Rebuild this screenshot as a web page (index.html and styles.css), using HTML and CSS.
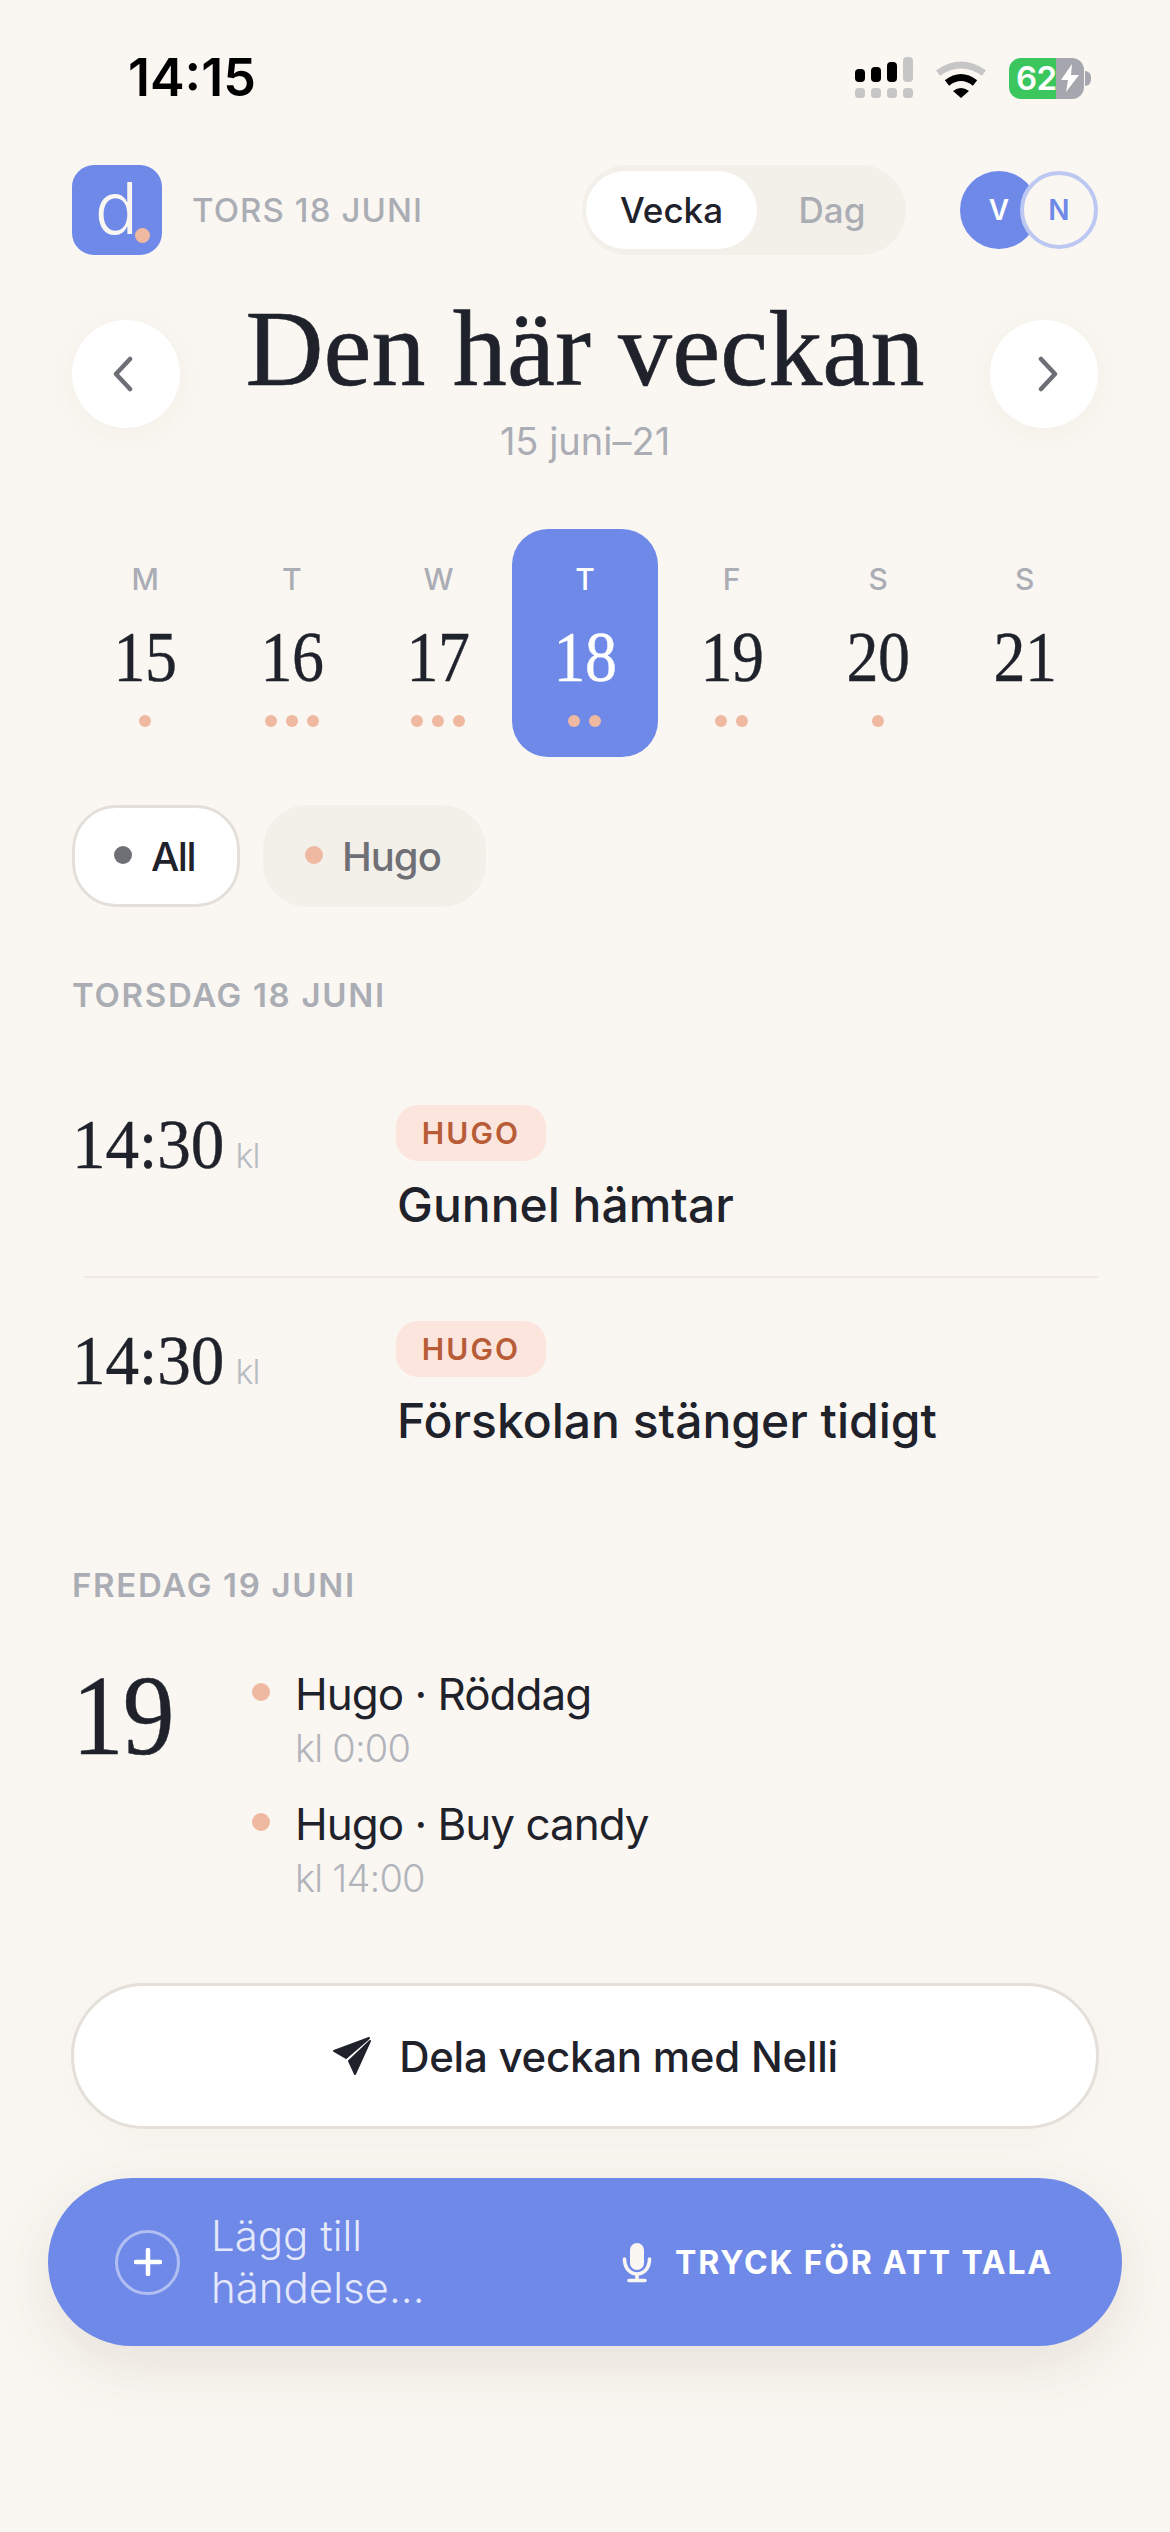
FILE: index.html
```html
<!DOCTYPE html>
<html lang="sv">
<head>
<meta charset="utf-8">
<title>Den här veckan</title>
<link rel="stylesheet" href="styles.css">
</head>
<body>
<main class="page">
  <header class="status">
    <span class="clock">14:15</span>
    <div class="status-icons">
      <svg class="signal" width="58" height="42" viewBox="0 0 58 42">
        <rect x="0" y="12" width="10" height="13" rx="4" fill="#000"/>
        <rect x="16" y="10" width="10" height="15" rx="4" fill="#000"/>
        <rect x="32" y="5" width="10" height="20" rx="4" fill="#000"/>
        <rect x="48" y="0" width="10" height="25" rx="4" fill="#c6c6c6"/>
        <rect x="0" y="31" width="10" height="10" rx="3.5" fill="#c6c6c6"/>
        <rect x="16" y="31" width="10" height="10" rx="3.5" fill="#c6c6c6"/>
        <rect x="32" y="31" width="10" height="10" rx="3.5" fill="#c6c6c6"/>
        <rect x="48" y="31" width="10" height="10" rx="3.5" fill="#c6c6c6"/>
      </svg>
      <svg class="wifi" width="52" height="38" viewBox="0 0 52 38">
        <path d="M3 13Q26 -3 49 13" fill="none" stroke="#c6c6c6" stroke-width="7"/>
        <path d="M12 23Q26 12 40 23" fill="none" stroke="#000" stroke-width="7"/>
        <path d="M18 31Q26 25 34 31L26 38Z" fill="#000"/>
      </svg>
      <div class="battery">
        <span class="battery-level">62</span>
        <svg class="bolt" width="20" height="28" viewBox="0 0 20 28"><path d="M12 0L1 16H8L6 28L19 11H11Z" fill="#fff"/></svg>
      </div>
      <span class="battery-nub"></span>
    </div>
  </header>

  <section class="topbar">
    <div class="brand">
      <div class="logo">d<span class="logo-dot"></span></div>
      <span class="today">TORS 18 JUNI</span>
    </div>
    <div class="segment">
      <span class="segment-item segment-active">Vecka</span>
      <span class="segment-item">Dag</span>
    </div>
    <div class="avatars">
      <span class="avatar avatar-v">V</span>
      <span class="avatar avatar-n">N</span>
    </div>
  </section>

  <section class="hero">
    <button class="nav-btn nav-prev" aria-label="Föregående">
      <svg width="22" height="36" viewBox="0 0 22 36"><path d="M18 3L4 18L18 33" fill="none" stroke="#6d6f76" stroke-width="4.5" stroke-linecap="round" stroke-linejoin="round"/></svg>
    </button>
    <div class="hero-title">
      <h1>Den här veckan</h1>
      <p class="range">15 juni–21</p>
    </div>
    <button class="nav-btn nav-next" aria-label="Nästa">
      <svg width="22" height="36" viewBox="0 0 22 36"><path d="M4 3L18 18L4 33" fill="none" stroke="#6d6f76" stroke-width="4.5" stroke-linecap="round" stroke-linejoin="round"/></svg>
    </button>
  </section>

  <section class="week">
    <div class="day"><span class="day-letter">M</span><span class="day-num">15</span><span class="dots"><i></i></span></div>
    <div class="day"><span class="day-letter">T</span><span class="day-num">16</span><span class="dots"><i></i><i></i><i></i></span></div>
    <div class="day"><span class="day-letter">W</span><span class="day-num">17</span><span class="dots"><i></i><i></i><i></i></span></div>
    <div class="day day-active"><span class="day-letter">T</span><span class="day-num">18</span><span class="dots"><i></i><i></i></span></div>
    <div class="day"><span class="day-letter">F</span><span class="day-num">19</span><span class="dots"><i></i><i></i></span></div>
    <div class="day"><span class="day-letter">S</span><span class="day-num">20</span><span class="dots"><i></i></span></div>
    <div class="day"><span class="day-letter">S</span><span class="day-num">21</span><span class="dots"></span></div>
  </section>

  <section class="chips">
    <span class="chip chip-on"><i class="chip-dot chip-dot-all"></i>All</span>
    <span class="chip chip-off"><i class="chip-dot"></i>Hugo</span>
  </section>

  <h2 class="section-label label-thu">TORSDAG 18 JUNI</h2>

  <article class="event">
    <div class="event-time"><span class="time-num">14:30</span><span class="time-kl">kl</span></div>
    <div class="event-body">
      <span class="badge">HUGO</span>
      <h3 class="event-title">Gunnel hämtar</h3>
    </div>
  </article>
  <hr class="divider">
  <article class="event">
    <div class="event-time"><span class="time-num">14:30</span><span class="time-kl">kl</span></div>
    <div class="event-body">
      <span class="badge">HUGO</span>
      <h3 class="event-title">Förskolan stänger tidigt</h3>
    </div>
  </article>

  <h2 class="section-label label-fri">FREDAG 19 JUNI</h2>

  <section class="friday">
    <div class="friday-col"><span class="friday-num">19</span></div>
    <div class="friday-items">
      <div class="item"><i class="item-dot"></i><div><p class="item-title">Hugo · Röddag</p><p class="item-time">kl 0:00</p></div></div>
      <div class="item"><i class="item-dot"></i><div><p class="item-title">Hugo · Buy candy</p><p class="item-time">kl 14:00</p></div></div>
    </div>
  </section>

  <button class="share">
    <svg width="40" height="40" viewBox="12 16 40 40"><path d="M49 18L14 31L26 38L47 20ZM50 21L29 41L35 54Z" fill="#1f222b" stroke="#1f222b" stroke-width="2" stroke-linejoin="round"/></svg>
    <span>Dela veckan med Nelli</span>
  </button>

  <section class="composer">
    <span class="plus">
      <svg width="28" height="28" viewBox="0 0 28 28"><path d="M14 2V26M2 14H26" stroke="#fff" stroke-width="4.5" stroke-linecap="round"/></svg>
    </span>
    <span class="composer-text">Lägg till händelse...</span>
    <span class="talk">
      <svg width="30" height="42" viewBox="16 11 30 42"><rect x="24" y="13" width="14" height="27" rx="7" fill="#faf7f2"/><path d="M18.5 29C18.5 38 24 44 31 44C38 44 43.500 38 43.500 29M31 44V50M23 50.500H39" fill="none" stroke="#faf7f2" stroke-width="3.600" stroke-linecap="round"/></svg>
      <span>TRYCK FÖR ATT TALA</span>
    </span>
  </section>
</main>
</body>
</html>
```
FILE: styles.css
```css
* { box-sizing: border-box; }
html, body { margin: 0; padding: 0; }
body {
  background: #faf7f2;
  font-family: Inter, "Noto Sans", "Liberation Sans", sans-serif;
  color: #1f222b;
  width: 1170px;
  height: 2532px;
  overflow: hidden;
}
h1, h2, h3, p { margin: 0; font-weight: inherit; }
i { display: block; font-style: normal; }
button { font-family: inherit; padding: 0; margin: 0; }

.page { width: 1170px; padding: 48px 72px 0; }

/* status bar */
.status {
  height: 60px;
  padding: 0 7px 0 56px;
  margin-bottom: 57px;
  display: flex;
  align-items: center;
  justify-content: space-between;
}
.clock { font-size: 52px; font-weight: 600; line-height: 60px; color: #000; }
.status-icons { display: flex; align-items: center; }
.wifi { margin-left: 22px; margin-top: 1px; }
.battery {
  width: 75px;
  height: 41px;
  margin-left: 22px;
  border-radius: 12px;
  background: linear-gradient(90deg, #3bc75e 0 63%, #a6a7ae 63% 100%);
  display: flex;
  align-items: center;
  padding-left: 7px;
  color: #fff;
}
.battery-level { font-size: 33px; font-weight: 600; letter-spacing: -.5px; line-height: 41px; }
.bolt { margin-left: 3px; flex: none; }
.battery-nub { width: 6px; height: 15px; margin-left: 1px; background: #a6a7ae; border-radius: 0 8px 8px 0; }

/* top bar */
.topbar { height: 90px; display: flex; align-items: center; }
.brand { display: flex; align-items: center; gap: 30px; margin-right: auto; }
.logo {
  width: 90px;
  height: 90px;
  border-radius: 22px;
  background: #6f89e8;
  color: #faf7f2;
  font-size: 72px;
  font-weight: 300;
  line-height: 86px;
  text-align: center;
  position: relative;
  padding-right: 1px;
}
.logo-dot { position: absolute; left: 63px; top: 63px; width: 15px; height: 15px; border-radius: 50%; background: #efb8a0; }
.today { font-size: 33px; font-weight: 500; color: #abadb5; letter-spacing: 1.1px; }
.segment {
  width: 324px;
  height: 90px;
  padding: 6px 4px;
  border-radius: 45px;
  background: #f3efe9;
  display: flex;
  align-items: center;
}
.segment-item { width: 145px; text-align: center; font-size: 35px; font-weight: 500; color: #abadb5; line-height: 78px; }
.segment-item + .segment-item { padding-left: 5px; }
.segment-active { width: 171px; background: #fff; color: #1f222b; border-radius: 39px; }
.avatars { display: flex; margin-left: 54px; }
.avatar { width: 78px; height: 78px; border-radius: 50%; display: flex; align-items: center; justify-content: center; font-size: 28px; font-weight: 600; }
.avatar-v { background: #6f89e8; color: #fff; }
.avatar-n { background: #faf7f2; color: #6f89e8; border: 4px solid #bcc8f2; margin-left: -18px; }

/* hero */
.hero { display: grid; grid-template-columns: 108px 1fr 108px; margin-top: 39px; }
.nav-btn {
  width: 108px;
  height: 108px;
  margin-top: 26px;
  border: 0;
  border-radius: 50%;
  background: #fff;
  box-shadow: 0 6px 36px rgba(90, 70, 40, .05);
  display: flex;
  align-items: center;
  justify-content: center;
}
.nav-prev { padding-right: 7px; }
.nav-next { padding-left: 7px; }
.hero-title { text-align: center; }
h1 { font-family: "Liberation Serif", serif; font-size: 108px; line-height: 110px; letter-spacing: .1px; color: #1f222b; -webkit-text-stroke: .6px #1f222b; }
.range { font-size: 38px; line-height: 44px; color: #abadb5; margin-top: 15px; }

/* week */
.week { display: grid; grid-template-columns: repeat(7, 1fr); margin-top: 66px; }
.day { height: 228px; padding-top: 35px; border-radius: 36px; display: flex; flex-direction: column; align-items: center; }
.day-letter { font-size: 30px; font-weight: 500; line-height: 30px; color: #abadb5; }
.day-num { font-family: "Liberation Serif", serif; font-size: 71px; line-height: 80px; margin-top: 23px; transform: scaleX(.9); letter-spacing: -.5px; color: #1f222b; -webkit-text-stroke: .4px currentColor; }
.dots { display: flex; gap: 9px; height: 12px; margin-top: 18px; }
.dots i { width: 12px; height: 12px; border-radius: 50%; background: #efb8a0; }
.day-active { background: #6f89e8; }
.day-active .day-letter, .day-active .day-num { color: #fff; }

/* chips */
.chips { display: flex; gap: 23px; margin-top: 48px; }
.chip { height: 102px; border-radius: 44px; display: flex; align-items: center; gap: 19px; font-size: 40px; font-weight: 500; }
.chip-on { width: 168px; padding-left: 39px; background: #fff; border: 3px solid #e4dfd8; color: #1f222b; letter-spacing: -1.5px; }
.chip-off { width: 223px; padding-left: 42px; background: #f3efe9; color: #6f7076; letter-spacing: -1px; }
.chip-dot { width: 18px; height: 18px; border-radius: 50%; background: #efb8a0; margin-top: -2px; }
.chip-dot-all { background: #6f7076; }

/* sections */
.section-label { font-size: 33px; line-height: 40px; font-weight: 600; letter-spacing: 1.7px; color: #abadb5; }
.label-thu { margin-top: 68px; margin-bottom: 90px; }
.label-fri { margin-top: 116px; margin-bottom: 51px; }

/* events */
.event { display: grid; grid-template-columns: 324px 1fr; }
.event-time { display: flex; align-items: baseline; }
.time-num { font-family: "Liberation Serif", serif; font-size: 70px; line-height: 80px; letter-spacing: -.2px; color: #1f222b; transform: scaleX(.96); transform-origin: 0 50%; -webkit-text-stroke: .4px #1f222b; margin-right: 5px; }
.time-kl { font-size: 34px; font-weight: 300; color: #b9bbc3; letter-spacing: -1px; }
.event-body { display: flex; flex-direction: column; align-items: flex-start; }
.badge { height: 56px; width: 150px; border-radius: 22px; background: #fbe5dd; color: #b85c38; font-size: 30px; font-weight: 600; letter-spacing: 2.1px; display: flex; align-items: center; justify-content: center; }
.event-title { font-size: 48px; line-height: 56px; font-weight: 500; margin-top: 16px; margin-left: 1px; color: #1f222b; }
.divider { border: 0; height: 2px; background: #efeae5; margin: 43px 0 43px 12px; }

/* friday */
.friday { display: flex; }
.friday-col { width: 180px; flex: none; }
.friday-num { display: block; font-family: "Liberation Serif", serif; font-size: 115px; line-height: 120px; letter-spacing: -1px; color: #1f222b; transform: scaleX(.9); transform-origin: 0 50%; -webkit-text-stroke: .5px #1f222b; }
.friday-items { padding-top: 12px; display: flex; flex-direction: column; gap: 28px; }
.item { display: flex; gap: 25px; }
.item-dot { width: 18px; height: 18px; border-radius: 50%; background: #efb8a0; margin-top: 15px; flex: none; }
.item-title { font-size: 44px; line-height: 52px; letter-spacing: -1px; color: #1f222b; }
.item-time { font-size: 38px; line-height: 44px; margin-top: 6px; font-weight: 300; letter-spacing: -.8px; color: #b2b4bb; }

/* share */
.share {
  width: 1028px;
  height: 146px;
  margin: 83px -1px 0;
  border: 3px solid #e4dfd8;
  border-radius: 73px;
  background: #fff;
  box-shadow: 0 8px 30px rgba(90, 70, 40, .03);
  display: flex;
  align-items: center;
  justify-content: center;
  gap: 27px;
  font-size: 42px;
  font-weight: 500;
  letter-spacing: -.25px;
  color: #1f222b;
}

/* composer */
.composer {
  width: 1074px;
  height: 168px;
  margin: 49px -24px 0;
  padding: 0 69px 0 67px;
  border-radius: 84px;
  background: #6f89e8;
  box-shadow: 0 18px 70px rgba(90, 70, 50, .13);
  display: flex;
  align-items: center;
  color: #fff;
}
.plus { width: 65px; height: 65px; border-radius: 50%; border: 3px solid rgba(255, 255, 255, .45); display: flex; align-items: center; justify-content: center; flex: none; }
.composer-text { width: 230px; margin-left: 31px; font-size: 42px; font-weight: 300; line-height: 52px; color: rgba(255, 255, 255, .82); }
.talk { margin-left: auto; display: flex; align-items: center; gap: 23px; font-size: 32px; font-weight: 700; letter-spacing: 1.8px; }
```
